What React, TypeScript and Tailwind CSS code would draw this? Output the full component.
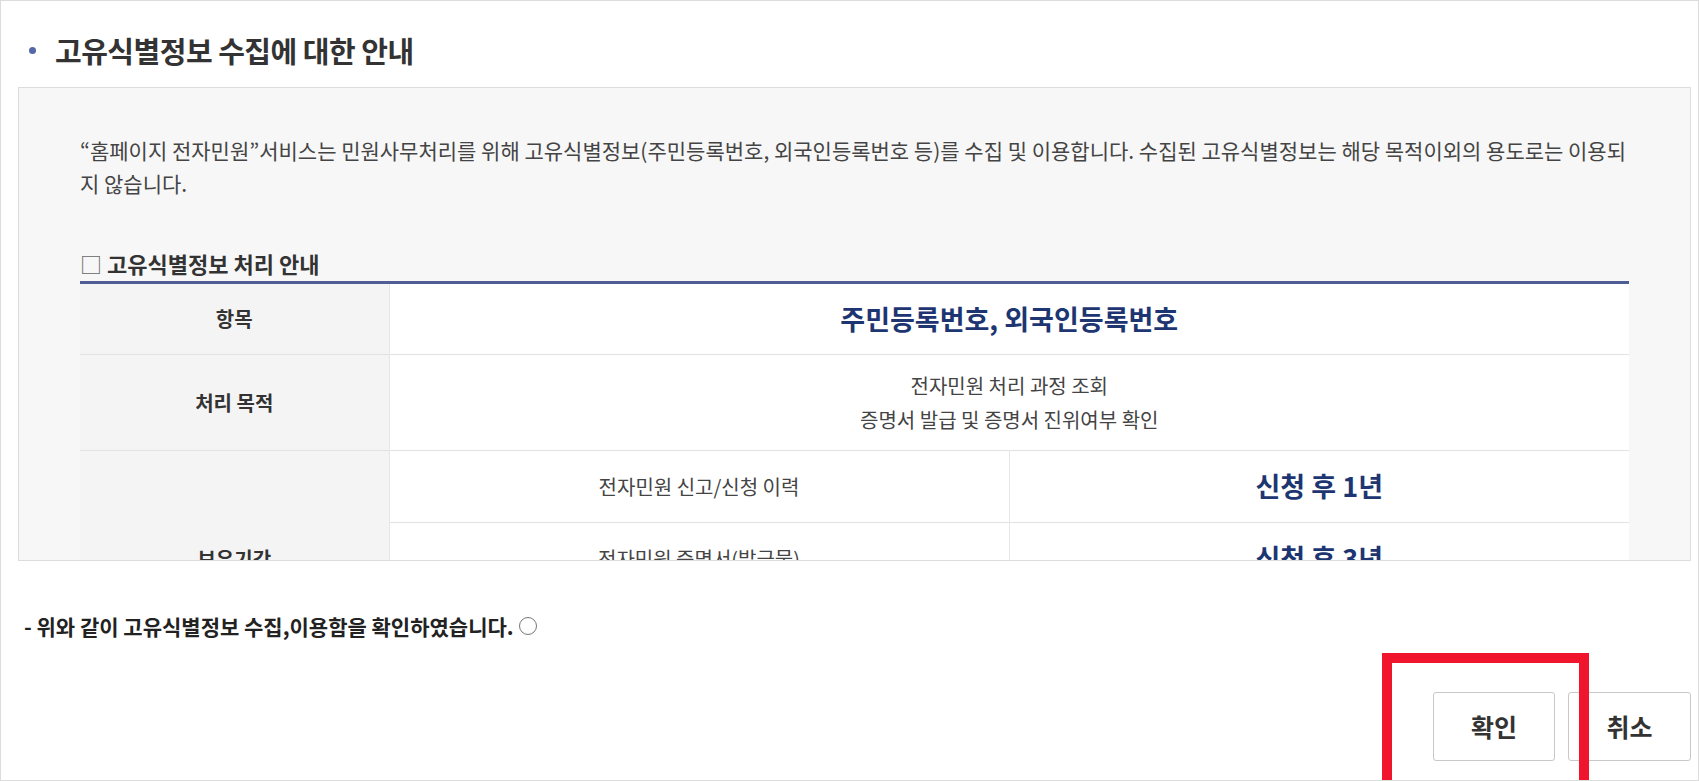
import React from "react";

const retention = [
  { item: "전자민원 신고/신청 이력", period: "신청 후 1년" },
  { item: "전자민원 증명서(발급물)", period: "신청 후 3년" },
  { item: "증명서 진위확인 이력", period: "신청 후 5년" },
];

function InfoTable() {
  return (
    <table className="w-full table-fixed border-collapse border-t-[3px] border-[#4e5d94] bg-white">
      <colgroup>
        <col className="w-[309px]" />
        <col />
        <col />
      </colgroup>
      <tbody>
        <tr className="h-[72px] border-b border-[#e2e2e2]">
          <th className="border-r border-[#e6e6e6] bg-[#f4f4f4] text-[20px] font-bold text-[#333]">항목</th>
          <td colSpan={2} className="text-center text-[27px] font-bold text-[#1d3672]">
            주민등록번호, 외국인등록번호
          </td>
        </tr>
        <tr className="h-[96px] border-b border-[#e2e2e2]">
          <th className="border-r border-[#e6e6e6] bg-[#f4f4f4] text-[20px] font-bold text-[#333]">처리 목적</th>
          <td colSpan={2} className="text-center text-[20px] leading-[34px] text-[#444]">
            <p>전자민원 처리 과정 조회</p>
            <p>증명서 발급 및 증명서 진위여부 확인</p>
          </td>
        </tr>
        {retention.map((row, i) => (
          <tr key={row.item} className="h-[72px] border-b border-[#e2e2e2]">
            {i === 0 && (
              <th rowSpan={retention.length} className="border-r border-[#e6e6e6] bg-[#f4f4f4] text-[20px] font-bold text-[#333]">
                보유기간
              </th>
            )}
            <td className="border-r border-[#e6e6e6] text-center text-[20px] text-[#444]">{row.item}</td>
            <td className="text-center text-[27px] font-bold text-[#1d3672]">{row.period}</td>
          </tr>
        ))}
      </tbody>
    </table>
  );
}

export default function App() {
  return (
    <div className="relative h-[781px] w-[1699px] overflow-hidden border border-[#dcdcdc] bg-white font-['Noto_Sans_CJK_KR','Noto_Sans',sans-serif]">
      {/* Title */}
      <div className="flex items-center pt-[31px] pl-[28px]">
        <span className="h-[7px] w-[7px] rounded-full bg-[#5468a8]" />
        <h2 className="ml-[19px] text-[29px] leading-[36px] font-bold tracking-[-0.5px] text-[#333]">
          고유식별정보 수집에 대한 안내
        </h2>
      </div>

      {/* Scrollable notice box */}
      <div className="mt-[19px] ml-[17px] h-[474px] w-[1673px] overflow-hidden border border-[#dddddd] bg-[#f7f7f7] px-[61px] pt-[46px]">
        <p className="text-[21px] leading-[33px] text-[#444]">
          “홈페이지 전자민원”서비스는 민원사무처리를 위해 고유식별정보(주민등록번호, 외국인등록번호 등)를 수집 및 이용합니다. 수집된 고유식별정보는 해당 목적이외의 용도로는 이용되지 않습니다.
        </p>
        <h3 className="mt-[48px] mb-[3px] text-[22px] leading-[30px] font-bold text-[#333]">
          <span className="font-normal text-[#666]">□</span> 고유식별정보 처리 안내
        </h3>
        <InfoTable />
      </div>

      {/* Agreement */}
      <div className="mt-[50px] flex items-center pl-[23px]">
        <p className="text-[21px] leading-[30px] font-bold text-[#222]">
          - 위와 같이 고유식별정보 수집,이용함을 확인하였습니다.
        </p>
        <span className="ml-[5px] h-[18px] w-[18px] rounded-full border border-[#767676] bg-white" />
      </div>

      {/* Buttons */}
      <div className="mt-[51px] flex justify-end gap-[13px] pr-[7px]">
        <button type="button" className="h-[69px] w-[122px] rounded-[3px] border border-[#c8c8c8] bg-white text-[25px] font-bold text-[#333]">
          확인
        </button>
        <button type="button" className="h-[69px] w-[123px] rounded-[3px] border border-[#c8c8c8] bg-white text-[25px] font-bold text-[#333]">
          취소
        </button>
      </div>

      {/* Highlight annotation */}
      <div className="pointer-events-none absolute top-[652px] left-[1381px] h-[140px] w-[207px] border-[10px] border-[#f0142d]" />
    </div>
  );
}
